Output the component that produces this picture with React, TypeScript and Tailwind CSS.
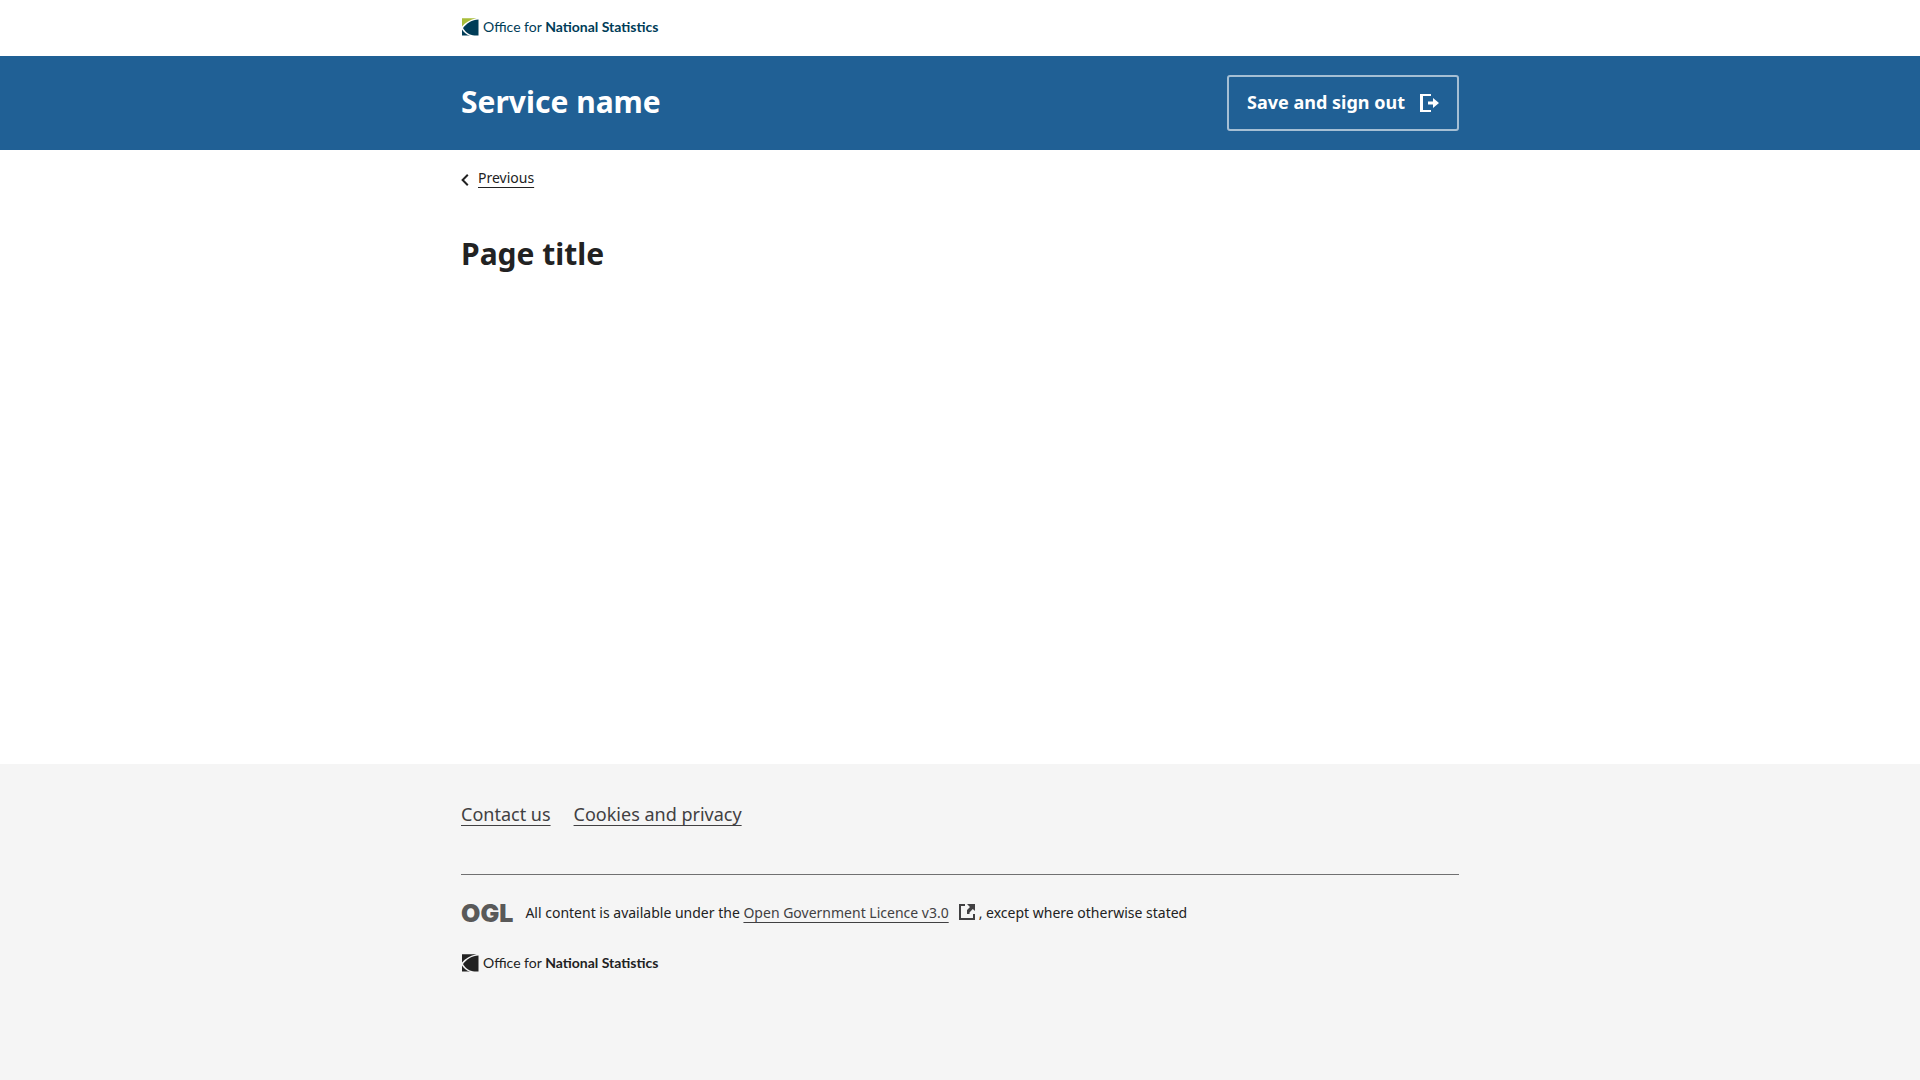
type LogoProps = { ink: string; accent: string };

function OnsLogo({ ink, accent }: LogoProps) {
  return (
    <span className="inline-flex h-5 items-center gap-1" style={{ color: ink }}>
      <svg width="18" height="18" viewBox="0 0 18 18" aria-hidden="true">
        <path d="M1 0.2H15.5C9 1.6 4.2 4.6 1 8.6Z" fill={accent} />
        <path d="M17.5 1.4V17.5H13.5C8.5 17.2 4.4 14.5 2 10C5.8 4.8 10.8 2 17.5 1.4Z" fill={ink} />
        <path d="M1 11.4C2.8 14.4 5.4 16.5 9 17.5H1Z" fill={ink} />
      </svg>
      <span className="whitespace-nowrap font-['Lato','Noto_Sans',sans-serif] text-[14px] leading-5">
        Office for <b className="font-bold">National Statistics</b>
      </span>
    </span>
  );
}

function Container({ children, className = "" }: { children: React.ReactNode; className?: string }) {
  return <div className={`mx-auto w-full max-w-[1030px] px-4 ${className}`}>{children}</div>;
}

const footerLinks = ["Contact us", "Cookies and privacy"];

export default function App() {
  return (
    <div className="flex min-h-screen flex-col bg-white font-['Noto_Sans',sans-serif] text-[18px] leading-7 text-[#222222]">
      <header>
        <Container className="flex h-14 items-center pb-[2px]">
          <a href="#home" aria-label="Office for National Statistics" className="flex">
            <OnsLogo ink="#003c57" accent="#a8bd3a" />
          </a>
        </Container>
        <div className="bg-[#206095] text-white">
          <Container className="flex items-center justify-between py-[19px]">
            <div className="pb-[3px] text-[30px] font-bold leading-10">Service name</div>
            <button
              type="button"
              className="flex items-center gap-3 rounded-[3px] border-2 border-white/60 px-[18px] pt-[11px] pb-[13px] font-bold"
            >
              Save and sign out
              <svg className="mt-[2px] ml-[2px]" width="20" height="20" viewBox="0 0 20 20" fill="currentColor" aria-hidden="true">
                <path d="M1 1H12V3H4V17H12V19H1Z" />
                <path d="M9 8.5H14V5L20 10L14 15V11.5H9Z" />
              </svg>
            </button>
          </Container>
        </div>
      </header>

      <main className="grow">
        <Container>
          <nav aria-label="Back" className="flex items-center gap-[9px] pt-4 text-[14px] leading-6">
            <svg className="mt-[3px]" width="8" height="12" viewBox="0 0 8 12" fill="none" stroke="currentColor" strokeWidth="2" aria-hidden="true">
              <path d="M6.8 0.8L1.6 6L6.8 11.2" />
            </svg>
            <a href="#previous" className="underline underline-offset-4">Previous</a>
          </nav>
          <h1 className="mt-11 text-[30px] font-bold leading-10">Page title</h1>
        </Container>
      </main>

      <footer className="bg-[#f5f5f5] pt-9 pb-[107px]">
        <Container>
          <ul className="flex gap-[23px]">
            {footerLinks.map((label) => (
              <li key={label}>
                <a href="#footer" className="text-[#414042] underline underline-offset-4">{label}</a>
              </li>
            ))}
          </ul>
          <hr className="mt-[46px] border-[#707071]" />
          <div className="mt-6 flex items-center gap-3 text-[14px] leading-7">
            <span className="font-['Inter',sans-serif] text-[25px] font-black text-[#595959]">OGL</span>
            <p>
              All content is available under the{" "}
              <a href="#licence" className="text-[#414042]">
                <span className="underline underline-offset-4">Open Government Licence v3.0</span>
                <svg className="ml-[10px] mr-1 inline-block align-[-2px]" width="16" height="16" viewBox="0 0 16 16" fill="currentColor" aria-label="opens in a new tab">
                  <path d="M0 0H6V2H2V14H14V10H16V16H0Z" />
                  <path d="M8 0H16V7L13.8 5L10.5 8.5V10H8V6L11 3Z" />
                </svg>
              </a>
              , except where otherwise stated
            </p>
          </div>
          <a href="#home" aria-label="Office for National Statistics" className="mt-[26px] flex">
            <OnsLogo ink="#222222" accent="#222222" />
          </a>
        </Container>
      </footer>
    </div>
  );
}
